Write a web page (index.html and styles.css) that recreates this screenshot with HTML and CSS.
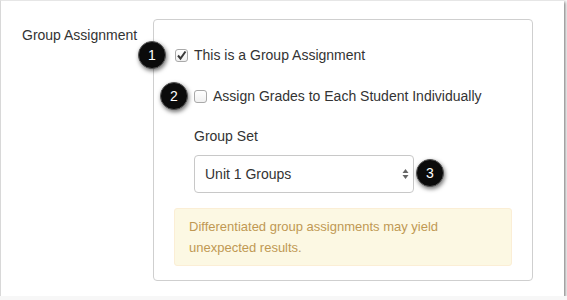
FILE: index.html
```html
<!DOCTYPE html>
<html lang="en">

<head>
    <meta charset="UTF-8">
    <title>Group Assignment</title>
    <link rel="stylesheet" href="styles.css">
</head>

<body>
    <div class="frame">
        <div class="label">Group Assignment</div>
        <div class="panel">
            <div class="row row-first">
                <span class="badge badge-1">1</span>
                <span class="check checked">
                    <svg width="11" height="11" viewBox="0 0 11 11"><path d="M2 5.5 L4.5 8.5 L9.5 1.5" fill="none" stroke="#3a3a3a" stroke-width="2" /></svg>
                </span>
                <span class="text">This is a Group Assignment</span>
            </div>
            <div class="row row-second">
                <span class="badge badge-2">2</span>
                <span class="check"></span>
                <span class="text">Assign Grades to Each Student Individually</span>
            </div>
            <div class="group-set">
                <div class="set-label">Group Set</div>
                <div class="select-wrap">
                    <div class="select">
                        <span>Unit 1 Groups</span>
                        <svg width="7" height="12" viewBox="0 0 7 12"><path d="M3.5 1 L6.5 5 L0.5 5 Z" fill="#666" /><path d="M3.5 11 L6.5 7 L0.5 7 Z" fill="#666" /></svg>
                    </div>
                    <span class="badge badge-3">3</span>
                </div>
            </div>
            <div class="alert">Differentiated group assignments may yield unexpected results.</div>
        </div>
    </div>
</body>

</html>
```

FILE: styles.css
```css
*{
    margin: 0;
    padding: 0;
    box-sizing: border-box;
}
body{
    background-color: #f7f7f7;
    font-family: "Liberation Sans", Arial, sans-serif;
    color: #333;
    font-size: 14px;
}
.frame{
    width: 564px;
    height: 296px;
    background: white;
    border-left: 1px solid #d8d8d8;
    border-top: 1px solid #e6e6e6;
    box-shadow: 1px 2px 3px rgba(0, 0, 0, 0.55);
    display: flex;
    padding: 18px 0 0 21px;
}
.label{
    width: 131px;
    padding-top: 8px;
    line-height: 16px;
}
.panel{
    width: 380px;
    height: 262px;
    border: 1px solid #cfcfcf;
    border-radius: 4px;
    padding: 0 0 0 20px;
}
.row{
    position: relative;
    display: flex;
    align-items: center;
    height: 20px;
}
.row-first{
    margin-top: 25px;
    margin-left: 1px;
}
.row-second{
    margin-top: 21px;
    margin-left: 20px;
}
.check{
    width: 13px;
    height: 13px;
    border: 1px solid #a9a9a9;
    border-radius: 3px;
    background: linear-gradient(#fff, #f0f0f0);
    display: flex;
    align-items: center;
    justify-content: center;
    margin-right: 6px;
}
.badge{
    position: absolute;
    width: 28px;
    height: 28px;
    border-radius: 50%;
    background: #0b0b0b;
    color: white;
    font-size: 14px;
    display: flex;
    align-items: center;
    justify-content: center;
    box-shadow: 1px 2px 4px rgba(0, 0, 0, 0.55);
    border: 1px solid #555;
}
.badge-1{
    left: -37px;
    top: -4px;
}
.badge-2{
    left: -34px;
    top: -4px;
}
.group-set{
    margin-left: 20px;
}
.set-label{
    margin-top: 22px;
    line-height: 16px;
}
.select-wrap{
    position: relative;
    margin-top: 11px;
}
.select{
    width: 220px;
    height: 38px;
    border: 1px solid #c8c8c8;
    border-radius: 4px;
    display: flex;
    align-items: center;
    justify-content: space-between;
    padding: 0 4px 0 10px;
    background: white;
}
.badge-3{
    left: 222px;
    top: 4px;
}
.alert{
    margin-top: 15px;
    width: 338px;
    height: 58px;
    background: #fcf8e3;
    border: 1px solid #fbeed5;
    border-radius: 3px;
    color: #c09853;
    font-size: 13px;
    line-height: 21px;
    padding: 7px 30px 0 14px;
}
```
